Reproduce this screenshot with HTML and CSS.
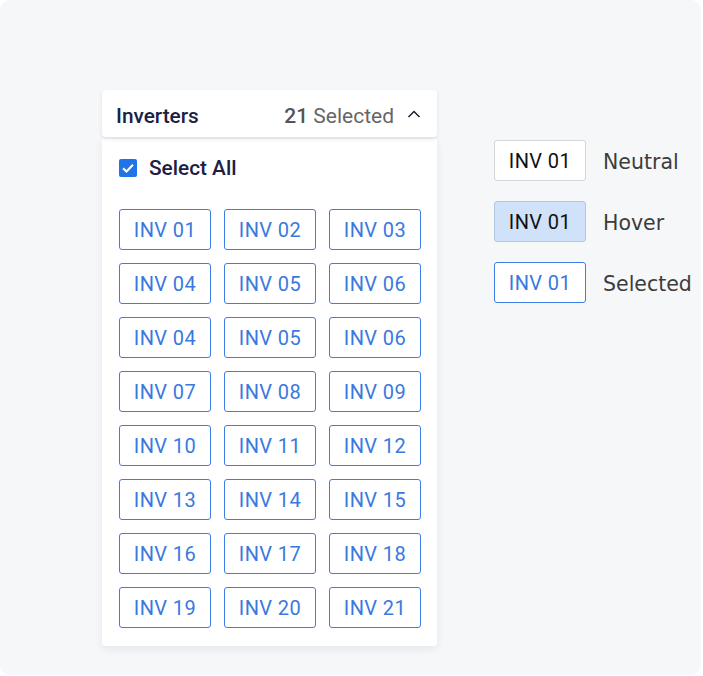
FILE: index.html
```html
<!DOCTYPE html>
<html>
<head>
<meta charset="utf-8">
<link rel="stylesheet" href="styles.css">
</head>
<body>
<div class="canvas">
  <div class="dropdown">
    <div class="dd-header">
      <span class="dd-title">Inverters</span>
      <span class="dd-count"><b>21</b> Selected</span>
      <svg class="chev" width="14" height="14" viewBox="0 0 14 14"><path d="M1.5 10 L7 4.5 L12.5 10" fill="none" stroke="#1c1f2e" stroke-width="1.5"/></svg>
    </div>
    <div class="dd-body">
      <label class="select-all">
        <span class="cb"><svg width="18" height="18" viewBox="0 0 18 18"><path d="M4 9.2 L7.5 12.5 L14 5.8" fill="none" stroke="#fff" stroke-width="2.2"/></svg></span>
        <span>Select All</span>
      </label>
      <div class="grid">
        <button class="inv">INV 01</button><button class="inv">INV 02</button><button class="inv">INV 03</button>
        <button class="inv">INV 04</button><button class="inv">INV 05</button><button class="inv">INV 06</button>
        <button class="inv">INV 04</button><button class="inv">INV 05</button><button class="inv">INV 06</button>
        <button class="inv">INV 07</button><button class="inv">INV 08</button><button class="inv">INV 09</button>
        <button class="inv">INV 10</button><button class="inv">INV 11</button><button class="inv">INV 12</button>
        <button class="inv">INV 13</button><button class="inv">INV 14</button><button class="inv">INV 15</button>
        <button class="inv">INV 16</button><button class="inv">INV 17</button><button class="inv">INV 18</button>
        <button class="inv">INV 19</button><button class="inv">INV 20</button><button class="inv">INV 21</button>
      </div>
    </div>
  </div>
  <div class="legend">
    <div class="legend-row"><span class="chip neutral">INV 01</span><span class="legend-label">Neutral</span></div>
    <div class="legend-row"><span class="chip hover">INV 01</span><span class="legend-label">Hover</span></div>
    <div class="legend-row"><span class="chip selected">INV 01</span><span class="legend-label">Selected</span></div>
  </div>
</div>
</body>
</html>
```
FILE: styles.css
```css
* { box-sizing: border-box; }
html, body { margin: 0; padding: 0; background: #ffffff; }
.canvas {
  width: 701px;
  height: 675px;
  background: #f6f7f9;
  border-radius: 10px;
  display: flex;
  align-items: flex-start;
  padding: 90px 0 0 102px;
}
.dropdown { width: 335px; display: flex; flex-direction: column; gap: 2px; }
.dd-header {
  height: 47px;
  background: #fff;
  border-radius: 4px;
  box-shadow: 0 2px 4px rgba(30, 40, 70, 0.10);
  display: flex;
  align-items: center;
  padding: 5px 16px 0 14px;
  font-family: Roboto, "Liberation Sans", sans-serif;
  position: relative;
  z-index: 1;
}
.dd-title { font-size: 20.8px; font-weight: 500; color: #1b2044; flex: 1; }
.dd-count { font-size: 21px; color: #666; margin-right: 13px; }
.dd-count b { font-weight: 500; color: #555; }
.chev { display: block; margin-top: -4px; }
.dd-body {
  background: #fff;
  border-radius: 0 0 4px 4px;
  box-shadow: 0 3px 8px rgba(30, 40, 70, 0.08);
  padding: 19px 16px 18px 17px;
}
.select-all {
  display: flex;
  align-items: center;
  gap: 12px;
  font-family: Roboto, "Liberation Sans", sans-serif;
  font-size: 20.8px;
  font-weight: 500;
  color: #1b2044;
  height: 20px;
}
.cb {
  width: 18px; height: 18px;
  background: #1f74e8;
  border-radius: 2px;
  display: block;
}
.cb svg { display: block; }
.grid {
  margin-top: 31px;
  display: grid;
  grid-template-columns: repeat(3, 92px);
  column-gap: 13px;
  row-gap: 13px;
}
.inv, .chip {
  height: 41px;
  width: 92px;
  background: #fff;
  border: 1.5px solid #3d7ee6;
  border-radius: 3px;
  font-family: Roboto, "Liberation Sans", sans-serif;
  font-size: 20px;
  letter-spacing: 0.4px;
  color: #3a79de;
  display: flex;
  align-items: center;
  justify-content: center;
  padding: 0;
}
.legend {
  margin-left: 57px;
  margin-top: 50px;
  display: flex;
  flex-direction: column;
  gap: 20px;
}
.legend-row { display: flex; align-items: center; gap: 17px; }
.chip.neutral { border-color: #d6d6d6; color: #111; }
.chip.hover { background: #cfe2f9; border-color: #b3c8df; color: #111; }
.legend-label {
  font-family: "DejaVu Sans", sans-serif;
  font-size: 20.5px;
  color: #3c3c3c;
  margin-top: 2px;
}
```
